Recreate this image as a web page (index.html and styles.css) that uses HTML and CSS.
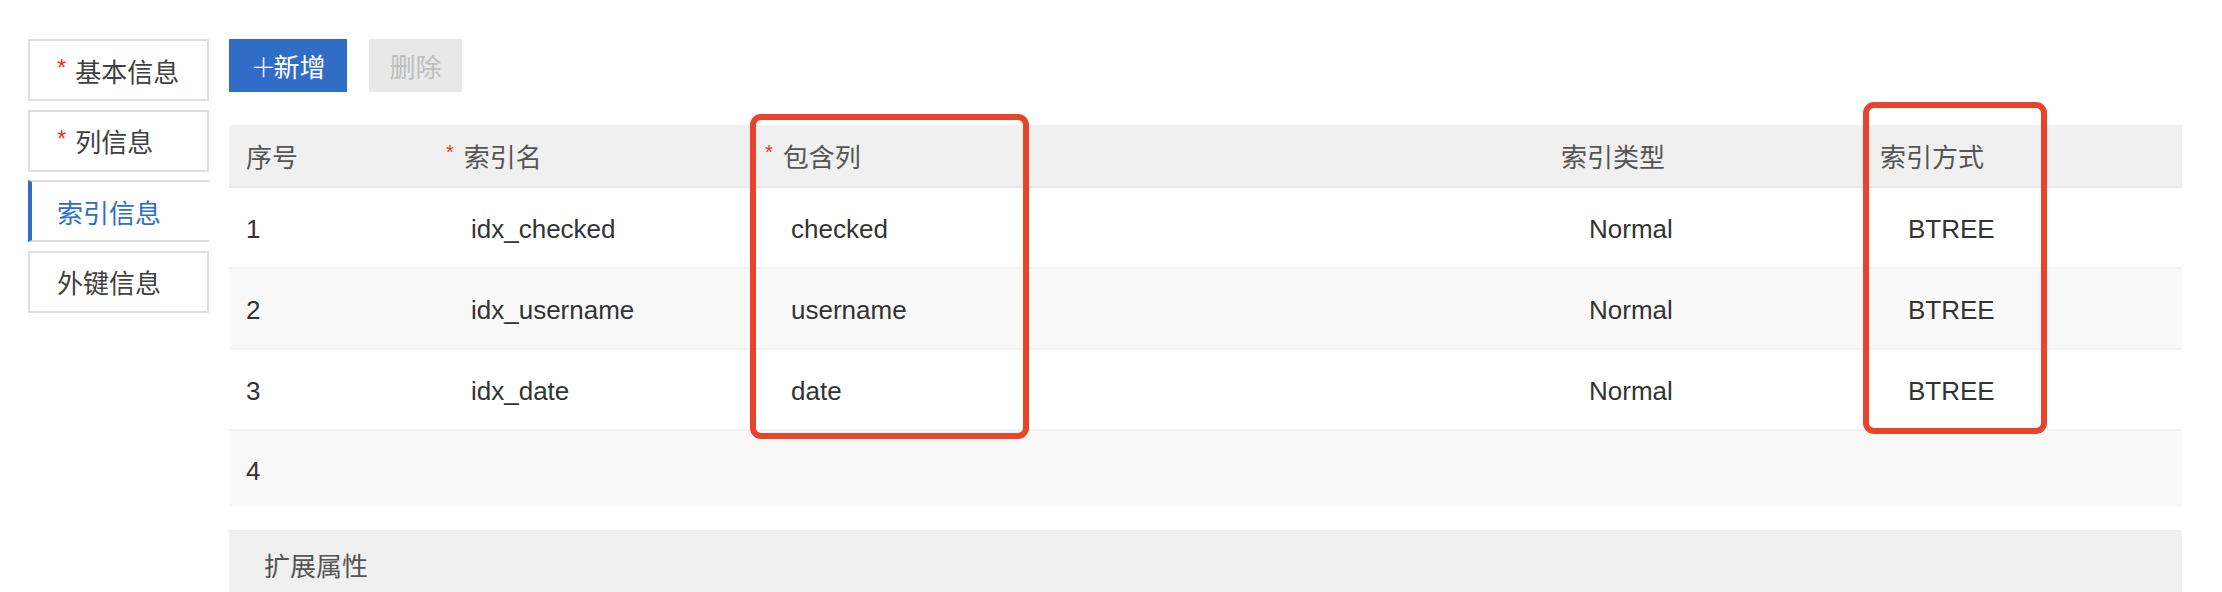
FILE: index.html
```html
<!DOCTYPE html>
<html lang="zh-CN">
<head>
<meta charset="utf-8">
<title>索引信息</title>
<link rel="stylesheet" href="styles.css">
</head>
<body>
<div class="page">
  <nav class="side">
    <div class="tab"><span class="req">*</span>基本信息</div>
    <div class="tab"><span class="req">*</span>列信息</div>
    <div class="tab active">索引信息</div>
    <div class="tab">外键信息</div>
  </nav>
  <main class="main">
    <div class="toolbar">
      <button class="btn primary"><span class="plus">＋</span>新增</button>
      <button class="btn disabled">删除</button>
    </div>
    <div class="table-wrap">
      <div class="row head">
        <div class="cell">序号</div>
        <div class="cell"><span class="req sm">*</span>索引名</div>
        <div class="cell"><span class="req sm">*</span>包含列</div>
        <div class="cell">索引类型</div>
        <div class="cell">索引方式</div>
      </div>
      <div class="row">
        <div class="cell">1</div>
        <div class="cell val">idx_checked</div>
        <div class="cell val">checked</div>
        <div class="cell val wide">Normal</div>
        <div class="cell val wide">BTREE</div>
      </div>
      <div class="row alt">
        <div class="cell">2</div>
        <div class="cell val">idx_username</div>
        <div class="cell val">username</div>
        <div class="cell val wide">Normal</div>
        <div class="cell val wide">BTREE</div>
      </div>
      <div class="row">
        <div class="cell">3</div>
        <div class="cell val">idx_date</div>
        <div class="cell val">date</div>
        <div class="cell val wide">Normal</div>
        <div class="cell val wide">BTREE</div>
      </div>
      <div class="row alt short">
        <div class="cell">4</div>
        <div class="cell val"></div>
        <div class="cell val"></div>
        <div class="cell val"></div>
        <div class="cell val"></div>
      </div>
      <div class="mark mark-cols"></div>
      <div class="mark mark-method"></div>
    </div>
    <div class="ext">扩展属性</div>
  </main>
</div>
</body>
</html>
```

FILE: styles.css
```css
* { box-sizing: border-box; }
html, body {
  margin: 0;
  padding: 0;
  background: #fff;
  overflow: hidden;
}
body {
  font-family: "Liberation Sans", "Noto Sans CJK SC", sans-serif;
  font-size: 26px;
  color: #333;
}
.page {
  display: flex;
  gap: 20px;
  padding: 39px 0 0 28px;
}
.side {
  width: 181px;
  flex: none;
  display: flex;
  flex-direction: column;
  gap: 8.5px;
}
.tab {
  height: 62px;
  border: 2px solid #dedede;
  display: flex;
  align-items: center;
  padding-left: 27px;
  color: #404040;
  background: #fff;
}
.tab.active {
  border-left: 4px solid #2f6dc6;
  border-right: none;
  padding-left: 25px;
  color: #2f6dc6;
}
.req {
  color: #e0382c;
  font-size: 24px;
  margin-right: 9px;
  align-self: center;
  position: relative;
  top: -2px;
}
.req.sm {
  font-size: 20px;
  margin-right: 10px;
  top: -3px;
}
.main {
  width: 1953px;
  flex: none;
}
.toolbar {
  display: flex;
  gap: 22px;
  height: 53px;
}
.btn {
  font-family: "Liberation Sans", "Noto Sans CJK SC", sans-serif;
  font-size: 26px;
  border: none;
  height: 53px;
  padding: 0;
  display: flex;
  align-items: center;
  justify-content: center;
}
.btn.primary {
  width: 118px;
  background: #2f6dc6;
  color: #fff;
}
.plus {
  font-family: "Noto Sans CJK SC", sans-serif;
  font-weight: 300;
  margin-right: -3px;
}
.btn.disabled {
  width: 93px;
  background: #e8e8e8;
  color: #bdbdbd;
}
.table-wrap {
  position: relative;
  margin-top: 33px;
}
.row {
  display: grid;
  grid-template-columns: 199px 320px 796px 319px 319px;
  height: 81px;
  background: #fff;
  border-bottom: 2px solid #f2f2f2;
  color: #333;
}
.row.alt { background: #f9f9f9; }
.row.short { height: 76px; border-bottom: none; }
.row.head {
  height: 63px;
  background: #f0f0f0;
  border-bottom: 2px solid #e9e9e9;
  color: #555;
}
.cell {
  display: flex;
  align-items: center;
  padding-left: 17px;
  white-space: nowrap;
}
.row:not(.head) .cell { padding-top: 4px; }
.row.head .cell:nth-child(2) { padding-left: 18px; }
.cell.val { padding-left: 43px; }
.cell.val.wide { padding-left: 45px; }
.mark {
  position: absolute;
  border: 6px solid #e8432b;
  border-radius: 11px;
  pointer-events: none;
}
.mark-cols {
  left: 521px;
  top: -11px;
  width: 279px;
  height: 325px;
}
.mark-method {
  left: 1634px;
  top: -23px;
  width: 184px;
  height: 332px;
}
.ext {
  margin-top: 23px;
  height: 74px;
  background: #f0f0f0;
  color: #555;
  display: flex;
  align-items: center;
  padding-left: 35px;
  padding-bottom: 6px;
}
```
